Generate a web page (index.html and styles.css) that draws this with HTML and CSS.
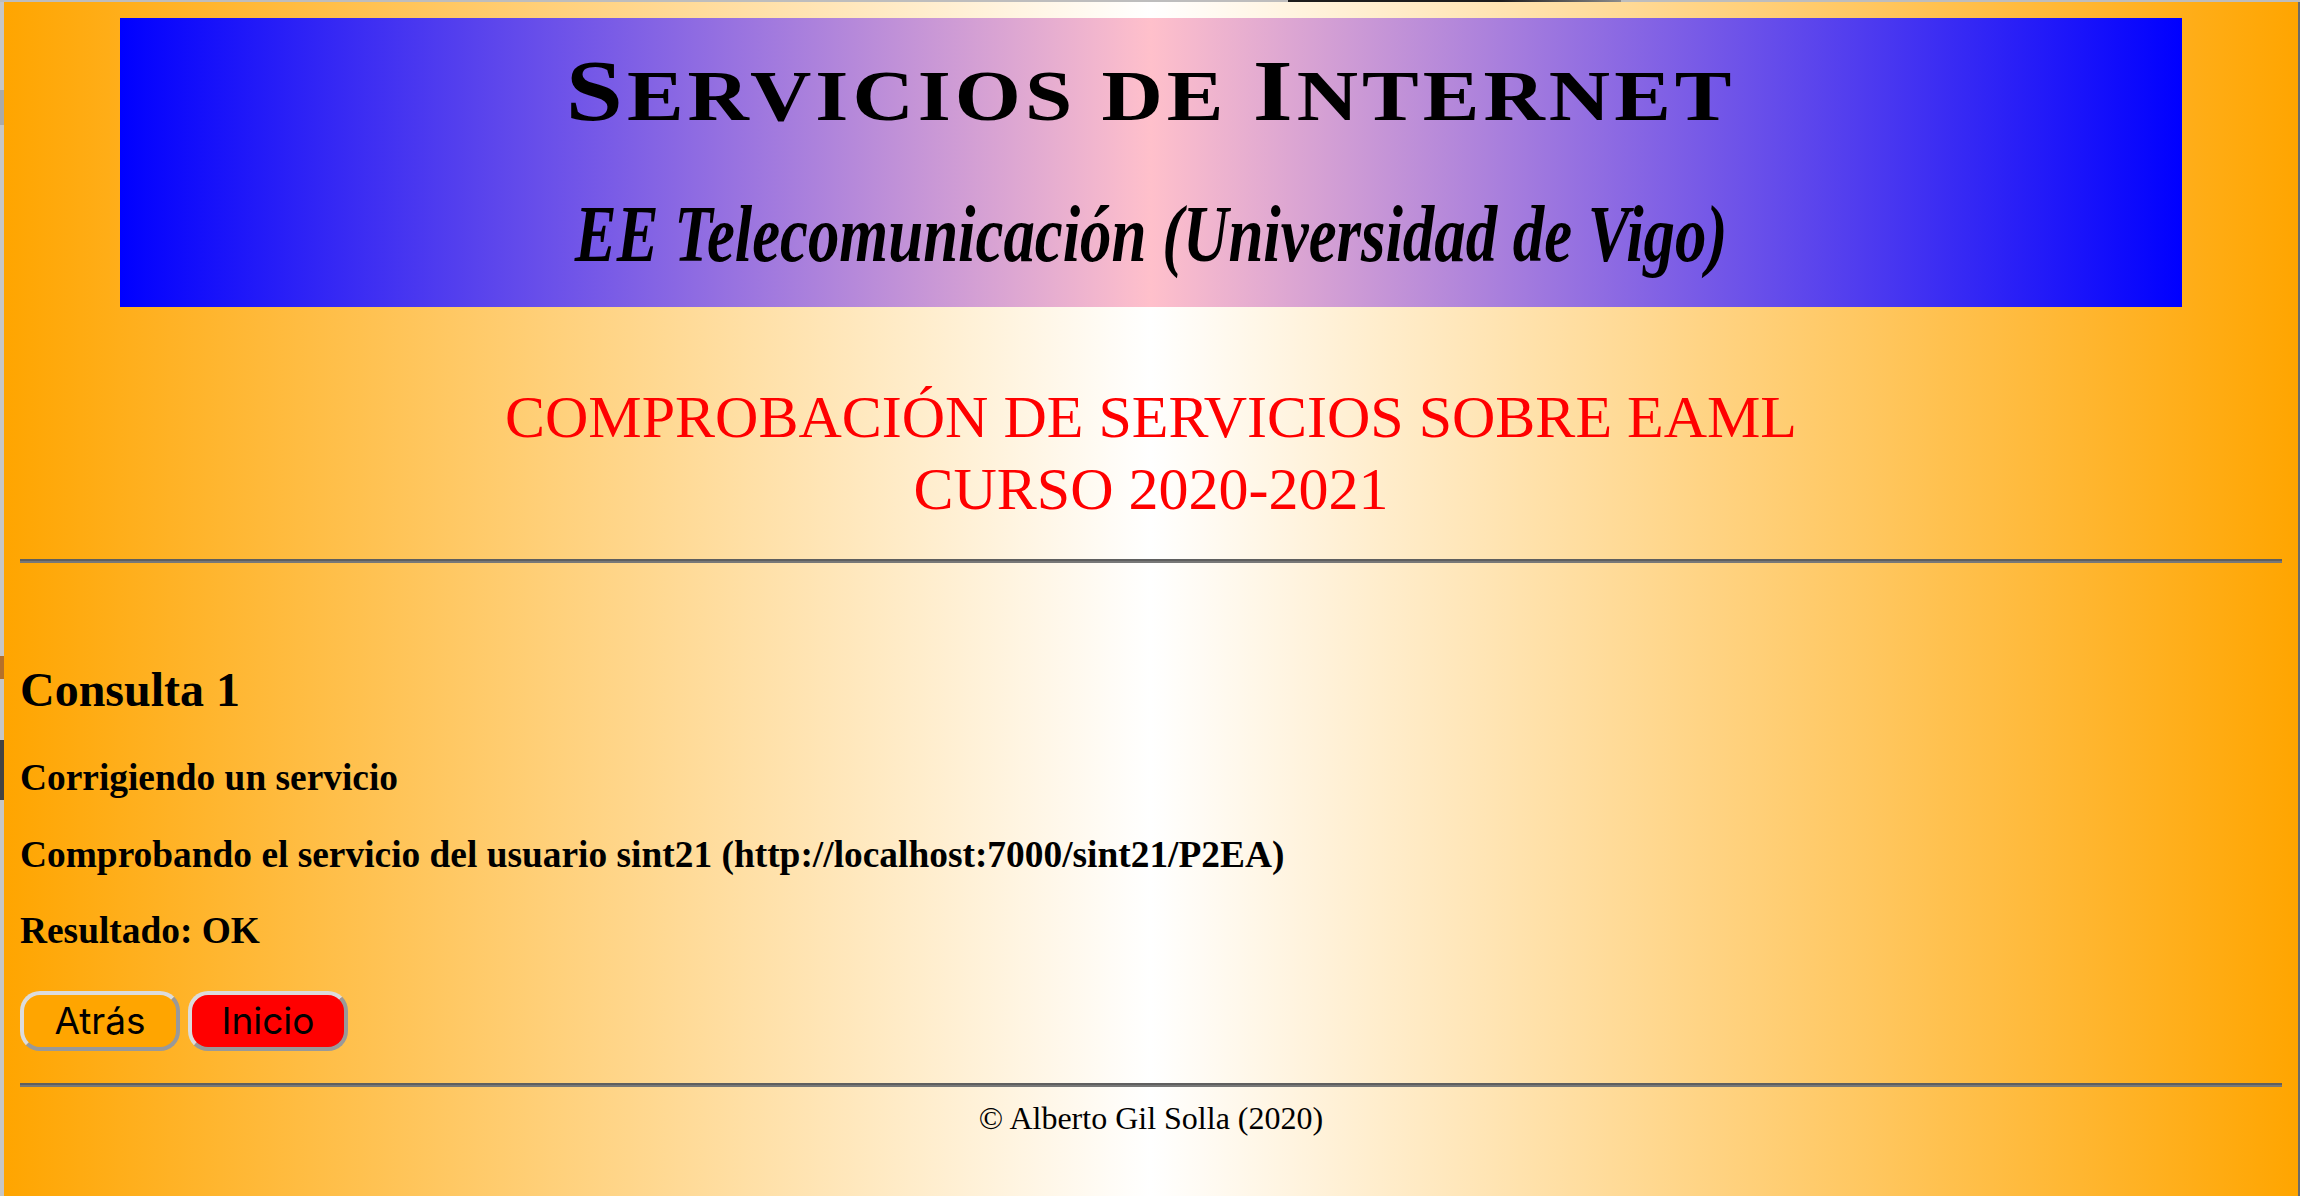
FILE: index.html
```html
<!DOCTYPE html>
<html lang="es">
<head>
  <meta charset="UTF-8">
  <title>Servicios de Internet</title>
  <link rel="stylesheet" href="styles.css">
</head>
<body>
  <div class="page">
    <header class="banner">
      <div class="banner-title"><span class="banner-title-text"><span class="cap">S</span>ervicios de <span class="cap">I</span>nternet</span></div>
      <div class="banner-sub"><span class="banner-sub-text">EE Telecomunicación (Universidad de Vigo)</span></div>
    </header>

    <div class="content">
      <h1 class="main-title">COMPROBACIÓN DE SERVICIOS SOBRE EAML<br>CURSO 2020-2021</h1>
      <hr>

      <h2 class="query-title">Consulta 1</h2>
      <p class="line">Corrigiendo un servicio</p>
      <p class="line">Comprobando el servicio del usuario sint21 (http://localhost:7000/sint21/P2EA)</p>
      <p class="line">Resultado: OK</p>

      <div class="buttons">
        <button type="button" class="btn">Atrás</button>
        <button type="button" class="btn btn-home">Inicio</button>
      </div>
      <hr class="hr-bottom">

      <footer class="copy">© Alberto Gil Solla (2020)</footer>
    </div>
  </div>
</body>
</html>
```

FILE: styles.css
```css
html, body {
  height: 100%;
}

/* Las tiras de los bordes son lo que asoma de las ventanas de detrás */
body {
  margin: 0;
  padding: 2px 2px 0 4px;
  box-sizing: border-box;
  background-color: #6b6b6b;
  background-image:
    linear-gradient(to right, #bdbdbd 1288px, #1c1c1c 1288px, #1c1c1c 1500px, #8c8c8c 1621px, #bdbdbd 1621px),
    linear-gradient(to bottom, #c6c6c6 90px, #aaa 90px, #aaa 125px, #c6c6c6 125px, #c6c6c6 656px, #b5702a 656px, #b5702a 679px, #c6c6c6 679px, #c6c6c6 740px, #444 740px, #444 800px, #c6c6c6 800px);
  background-size: 100% 2px, 4px 100%;
  background-repeat: no-repeat;
  font-family: "Liberation Serif", serif;
  overflow: hidden;
}

.page {
  height: 100%;
  padding-top: 16px;
  box-sizing: border-box;
  background: linear-gradient(to right, orange, white, orange);
  color: black;
}

/* Cabecera */
.banner {
  width: 2062px;
  height: 289px;
  margin: 0 auto;
  background: linear-gradient(to right, blue, pink, blue);
  text-align: center;
}

.banner-title {
  padding-top: 25px;
  font-size: 72px;
  line-height: 96px;
  font-weight: bold;
  letter-spacing: 3.4px;
  text-transform: uppercase;
}

.banner-title-text {
  display: inline-block;
  transform: scaleX(1.18);
  white-space: nowrap;
}

.cap {
  font-size: 87px;
}

.banner-sub {
  margin-top: 42px;
  font-size: 80px;
  line-height: 96px;
  font-weight: bold;
  font-style: italic;
}

.banner-sub-text {
  display: inline-block;
  transform: scaleX(0.785);
  white-space: nowrap;
}

.content {
  padding: 0 16px;
}

.main-title {
  margin: 74px 0 0 0;
  font-size: 60px;
  line-height: 72px;
  font-weight: normal;
  color: red;
  text-align: center;
}

hr {
  height: 4px;
  margin: 34px 0 0 0;
  border: none;
  background: linear-gradient(#5f5f5f 50%, #787878 50%);
}

.query-title {
  margin: 97px 0 0 0;
  font-size: 48px;
  line-height: 60px;
}

.line {
  margin: 40px 0 0 0;
  font-size: 37.4px;
  line-height: 36.5px;
  font-weight: bold;
}

.buttons {
  display: flex;
  gap: 8px;
  margin-top: 41px;
}

.btn {
  width: 160px;
  height: 60px;
  padding: 0;
  border: 4px solid;
  border-color: #dcdcdc #999 #999 #dcdcdc;
  border-radius: 20px;
  background-color: orange;
  font-family: Inter, sans-serif;
  font-size: 37px;
  color: black;
}

.btn-home {
  background-color: red;
}

.hr-bottom {
  margin-top: 32px;
}

.copy {
  margin-top: 13px;
  font-size: 32px;
  text-align: center;
}
```
